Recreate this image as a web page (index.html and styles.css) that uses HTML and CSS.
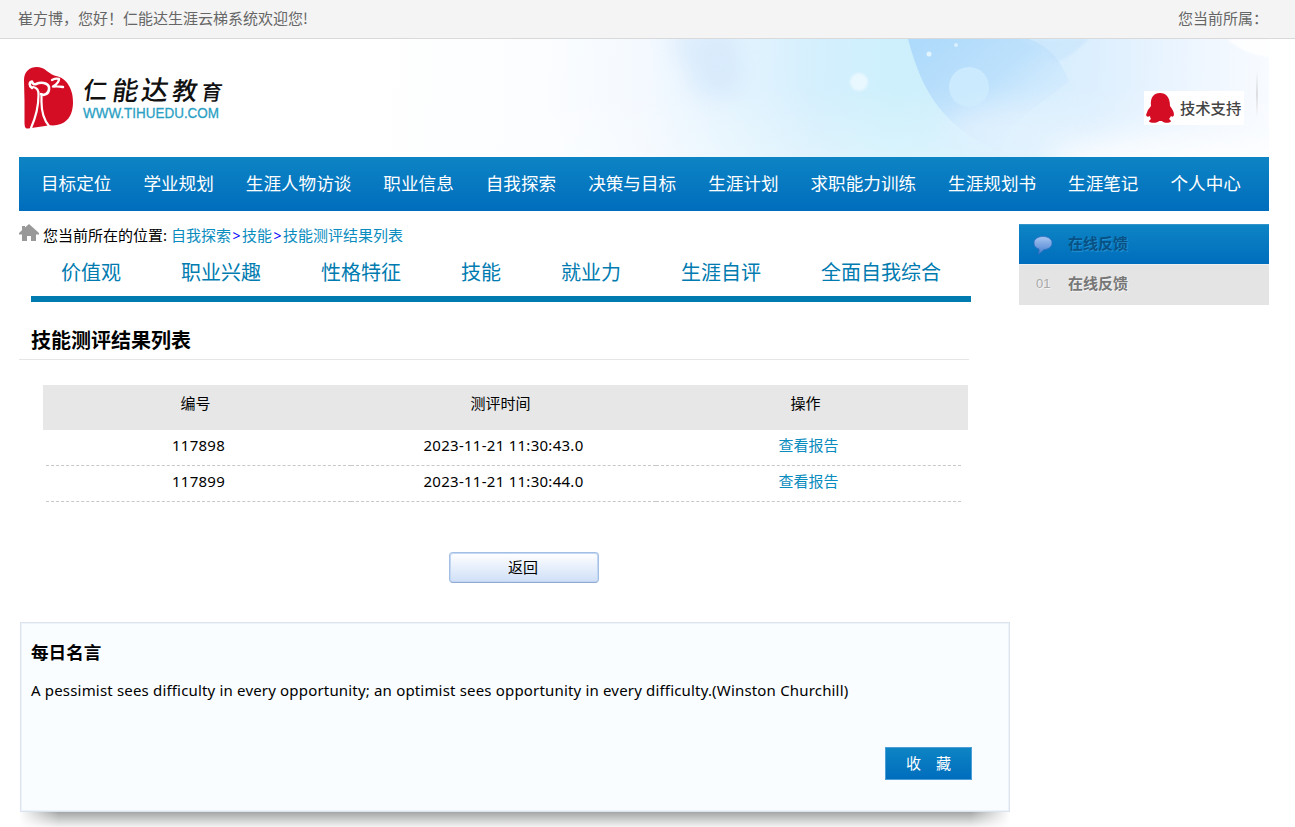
FILE: index.html
```html
<!DOCTYPE html>
<html lang="zh-CN">
<head>
<meta charset="utf-8">
<title>技能测评结果列表</title>
<link rel="stylesheet" href="styles.css">
</head>
<body>
<div class="topbar"><span>崔方博，您好！仁能达生涯云梯系统欢迎您!</span><span>您当前所属：</span></div>
<div class="wrap">
  <header class="header">
    <svg class="art" viewBox="0 0 1250 118" width="1250" height="118" aria-hidden="true">
      <defs>
        <linearGradient id="sky" gradientUnits="userSpaceOnUse" x1="0" x2="1250" y1="0" y2="60">
          <stop offset=".27" stop-color="#fff"/><stop offset=".42" stop-color="#fbfdff"/><stop offset=".5" stop-color="#f4f9ff"/>
          <stop offset=".57" stop-color="#e4f4fe"/><stop offset=".64" stop-color="#d4effd"/><stop offset=".7" stop-color="#cdf0fc"/><stop offset=".77" stop-color="#d0eefd"/>
          <stop offset=".86" stop-color="#ddeffe"/><stop offset=".94" stop-color="#eef6ff"/><stop offset="1" stop-color="#f8fbff"/>
        </linearGradient>
        <linearGradient id="leaf" gradientUnits="userSpaceOnUse" x1="900" x2="1000" y1="0" y2="120">
          <stop offset="0" stop-color="#aedafb"/><stop offset=".5" stop-color="#bde1fc"/><stop offset="1" stop-color="#d8ecfe" stop-opacity=".3"/>
        </linearGradient>
        <linearGradient id="fade" x1="0" x2="0" y1="0" y2="1">
          <stop offset=".4" stop-color="#fff" stop-opacity="0"/><stop offset="1" stop-color="#fff" stop-opacity=".25"/>
        </linearGradient>
        <filter id="soft" x="-30%" y="-60%" width="160%" height="220%"><feGaussianBlur stdDeviation="12"/></filter>
        <filter id="edge"><feGaussianBlur stdDeviation="1"/></filter>
        <linearGradient id="rule" x1="0" x2="0" y1="0" y2="1">
          <stop offset="0" stop-color="#ddd" stop-opacity="0"/><stop offset=".5" stop-color="#dcdee2"/><stop offset="1" stop-color="#ddd" stop-opacity="0"/>
        </linearGradient>
      </defs>
      <rect width="1250" height="118" fill="url(#sky)"/>
      <path d="M650 -10H716Q726 30 721 55L684 62Q660 25 650 -10Z" fill="#c3dcf8" opacity=".4" filter="url(#soft)"/>
      <path d="M889 0C900 40 914 75 958 101Q970 110 982 112C990 80 1020 68 1050 42Q1038 10 1010 0Z" fill="url(#leaf)"/>
      <path d="M1000 0H1070Q1050 20 1035 24Q1022 12 1000 0Z" fill="#c4e2fc" opacity=".5" filter="url(#edge)"/>
      <ellipse cx="1000" cy="88" rx="75" ry="22" fill="#e0f0fe" opacity=".6" filter="url(#soft)"/>
      <rect width="1250" height="118" fill="url(#fade)"/>
      <ellipse cx="1150" cy="120" rx="120" ry="24" fill="#fff" opacity=".7" filter="url(#soft)"/>
      <path d="M1208 0H1250V18Q1225 15 1208 0Z" fill="#fff" opacity=".9" filter="url(#edge)"/>
      <circle cx="950" cy="48" r="20" fill="#cdebfd" opacity=".9"/>
      <circle cx="840" cy="43" r="9" fill="#e9f8ff" filter="url(#edge)"/>
      <circle cx="910" cy="15" r="2.5" fill="#e2f5ff"/><circle cx="937" cy="6" r="2" fill="#d9f0ff"/>
      <rect x="1237" y="32" width="2" height="46" fill="url(#rule)"/>
    </svg>
    <svg class="logo" viewBox="0 0 204 64" width="204" height="64" role="img" aria-label="仁能达教育">
      <path d="M1 14C1 3 11-1 19 2C24 4 26 8 33 10C44 12 50.500 24 50 37C49.500 53 41 59 30 59.500Q26 59 22 60L5 62.500C2 63 1.500 60 1.500 56V35Z" fill="#d40d25"/>
      <g fill="none" stroke="#fff" stroke-linecap="round" stroke-linejoin="round">
        <path d="M9 22C6 20 6 16 9 15.500Q10 19 13 18C20 15 27 18 26 23.500C25.500 28 21 30 18 28" stroke-width="2.600"/>
        <path d="M10 21Q16 22 15.500 29C15.500 42 12 53 8 62M18.500 28V36C18.500 47 21 54 26 60" stroke-width="2.200"/>
        <path d="M29 14Q33 12 36 13Q36 17 30 20.500Q35 20 40 21" stroke-width="2.400"/>
      </g>
      <g class="brand" transform="translate(5 0) skewX(-8)">
        <text x="59" y="33" font-size="24">仁</text><text x="88" y="34" font-size="26">能</text><text x="117" y="34" font-size="27">达</text><text x="148" y="34" font-size="25">教</text><text x="177" y="34" font-size="21">育</text>
      </g>
      <text class="site" x="60" y="52" textLength="136" lengthAdjust="spacingAndGlyphs">WWW.TIHUEDU.COM</text>
    </svg>
    <div class="support">
      <svg viewBox="0 0 30 32" width="30" height="32" aria-hidden="true"><path d="M6 14C5 5 9 1 15 1S25 5 25 14Q29 19 29 23Q28 26 26 24Q25 26 24 27Q26 28 26 29.500C24 31.500 18 31 17 29H14C13 31 6 31.500 4 29.500Q4 28 6 27Q5 26 5 24Q2 26 1 23Q2 18 6 14Z" fill="#d40d25"/></svg>
      <span>技术支持</span>
    </div>
  </header>
  <nav class="nav"><a>目标定位</a><a>学业规划</a><a>生涯人物访谈</a><a>职业信息</a><a>自我探索</a><a>决策与目标</a><a>生涯计划</a><a>求职能力训练</a><a>生涯规划书</a><a>生涯笔记</a><a>个人中心</a></nav>
  <div class="columns">
    <main class="main">
      <div class="crumbs">
        <svg viewBox="0 0 20 18" width="20" height="18" aria-hidden="true"><path d="M10 0L20 9V10.500H17V17H12V12H8V17H3V10.500H0V9L3 6.300V2H6V3.600Z" fill="#999"/></svg>
        <span class="here">您当前所在的位置:</span><a>自我探索</a><i>&gt;</i><a>技能</a><i>&gt;</i><a>技能测评结果列表</a>
      </div>
      <div class="tabs"><a>价值观</a><a>职业兴趣</a><a>性格特征</a><a>技能</a><a>就业力</a><a>生涯自评</a><a>全面自我综合</a></div>
      <h1 class="title">技能测评结果列表</h1>
      <div class="list">
        <div class="row head"><span>编号</span><span>测评时间</span><span>操作</span></div>
        <div class="row"><span>117898</span><span>2023-11-21 11:30:43.0</span><a>查看报告</a></div>
        <div class="row"><span>117899</span><span>2023-11-21 11:30:44.0</span><a>查看报告</a></div>
      </div>
      <button class="back">返回</button>
      <section class="quote">
        <h2>每日名言</h2>
        <p>A pessimist sees difficulty in every opportunity; an optimist sees opportunity in every difficulty.(Winston Churchill)</p>
        <button class="save"><span>收</span><span>藏</span></button>
      </section>
      <div class="shadow"></div>
    </main>
    <aside class="side">
      <div class="side-head">
        <svg viewBox="0 0 20 20" width="20" height="20" aria-hidden="true">
          <defs><linearGradient id="bub" x1="0" x2="0" y1="0" y2="1"><stop offset="0" stop-color="#a6c6f1"/><stop offset="1" stop-color="#477fcf"/></linearGradient></defs>
          <path d="M10 1.500C15 1.500 19 4 19 8S15 14.500 11 14.500Q9 17 5.500 19Q6.500 16 6 14Q1 12.500 1 8C1 4 5 1.500 10 1.500Z" fill="url(#bub)" stroke="#356fc0" stroke-width=".8"/>
        </svg>
        <span>在线反馈</span>
      </div>
      <div class="side-item"><small>01</small><span>在线反馈</span></div>
    </aside>
  </div>
</div>
</body>
</html>
```
FILE: styles.css
```css
* { box-sizing: border-box; }
body {
  margin: 0;
  height: 827px;
  overflow: hidden;
  background: #fff;
  color: #000;
  font: 15px "Noto Sans", "Noto Sans CJK SC", sans-serif;
}
.topbar {
  height: 39px;
  padding: 0 27px 0 18px;
  display: flex;
  justify-content: space-between;
  line-height: 35px;
  background: #f4f4f4;
  border-bottom: 1px solid #d9d9d9;
  color: #666;
  font-family: "Noto Sans CJK SC", sans-serif;
}
.wrap { width: 1250px; margin-left: 19px; }
.header { position: relative; height: 118px; padding: 27px 25px 0 4px; display: flex; justify-content: space-between; }
.art { position: absolute; left: 0; top: 0; }
.logo { position: relative; overflow: visible; }
.brand { font-family: "Noto Sans CJK SC", sans-serif; font-weight: 500; fill: #111; }
.site { font: 14px "Liberation Sans", sans-serif; fill: #2b9fc4; stroke: #2b9fc4; stroke-width: .3px; }
.support {
  position: relative;
  width: 100px;
  height: 34px;
  margin-top: 25px;
  padding-left: 1px;
  display: flex;
  align-items: center;
  gap: 5px;
  background: #fff;
  color: #444;
  font: 500 15.3px/33px "Noto Sans CJK SC", sans-serif;
  white-space: nowrap;
}
.support span { height: 34px; }
.nav {
  height: 54px;
  padding-left: 22px;
  display: flex;
  gap: 32px;
  line-height: 53px;
  font-size: 17.6px;
  color: #fff;
  white-space: nowrap;
  background: linear-gradient(#0d84c4, #006dbd);
}
.columns { display: flex; justify-content: space-between; }
.main { width: 991px; }
.crumbs { height: 40px; padding-top: 12px; display: flex; line-height: 24px; white-space: nowrap; }
.crumbs svg { flex: none; margin: 1px 4px 0 0; }
.crumbs a, .row a { color: #0a8cbe; }
.crumbs i { width: 11px; text-align: center; font-style: normal; font-size: 14px; line-height: 26px; color: #00f; }
.here { width: 128px; }
.tabs {
  width: 940px;
  height: 51px;
  margin-left: 12px;
  padding-left: 30px;
  display: flex;
  gap: 60px;
  line-height: 44px;
  font-size: 20px;
  color: #007bb0;
  border-bottom: 6px solid #007bb0;
}
.title {
  width: 950px;
  height: 58px;
  margin: 0;
  padding: 19px 12px 0;
  line-height: 40px;
  font-size: 20px;
  border-bottom: 1px solid #e5e5e5;
}
.list { width: 925px; margin: 25px 0 0 24px; }
.row {
  width: 915px;
  height: 36px;
  margin-left: 3px;
  display: grid;
  grid-template-columns: repeat(3, 305px);
  line-height: 31px;
  text-align: center;
  letter-spacing: .27px;
}
.row a { letter-spacing: 0; }
.row > * { border-bottom: 1px dashed #c8c8c8; }
.row.head { width: 925px; height: 45px; margin-left: 0; line-height: 37px; letter-spacing: 0; background: #e7e7e7; }
.row.head > * { border: 0; }
.back {
  display: block;
  width: 150px;
  height: 31px;
  margin: 50px 0 0 430px;
  padding: 0 2px 2px 0;
  border: 1px solid #a3bfe3;
  border-bottom-color: #8fabd2;
  border-radius: 4px;
  box-shadow: inset 0 0 0 1px #c3d7f3;
  background: linear-gradient(#fff, #e7effc 50%, #cfdff6);
  color: #000;
  font: 15px/27px "Noto Sans CJK SC", sans-serif;
}
.quote {
  height: 190px;
  margin: 39px 0 0 1px;
  padding: 14px 38px 0 10px;
  display: flex;
  flex-direction: column;
  background: #f9fdff;
  border: 1px solid #dbe4ee;
  box-shadow: inset 0 0 0 1px #edf3f8;
}
.quote h2 { margin: 0; font-size: 17.6px; line-height: 30px; }
.quote p { margin: 8px 0 0; line-height: 30px; letter-spacing: .176px; white-space: nowrap; }
.save {
  width: 87px;
  height: 33px;
  margin: 42px -1px 0 auto;
  padding: 0;
  display: flex;
  justify-content: center;
  gap: 15px;
  border: 1px solid #4c9ed6;
  background: linear-gradient(#0d84c4, #006dbd);
  color: #fff;
  font: 15px/29px "Noto Sans CJK SC", sans-serif;
}
.shadow {
  height: 15px;
  background: linear-gradient(90deg, #fff 0, transparent 4%, transparent 96%, #fff), linear-gradient(#a4a6a6, #f4f4f4);
}
.side { width: 250px; padding-top: 13px; font-family: "Noto Sans CJK SC", sans-serif; font-weight: 700; }
.side-head, .side-item { display: grid; grid-template-columns: 35px 1fr; }
.side-head {
  height: 40px;
  padding-left: 14px;
  align-items: center;
  line-height: 34px;
  color: #095185;
  text-shadow: 1px 1px 1px #2495d3;
  border-top: 1px solid #3195cb;
  background: linear-gradient(#0d84c4, #006dbd);
}
.side-head span { height: 38px; }
.side-item { height: 41px; padding-left: 17px; grid-template-columns: 32px 1fr; line-height: 36px; background: #e4e4e4; color: #777; border-top: 1px solid #eee; text-shadow: 1px 1px 0 #f4f4f4; }
.side-item small { font: 13px/38px "Liberation Sans", sans-serif; color: #aaa; }
```
